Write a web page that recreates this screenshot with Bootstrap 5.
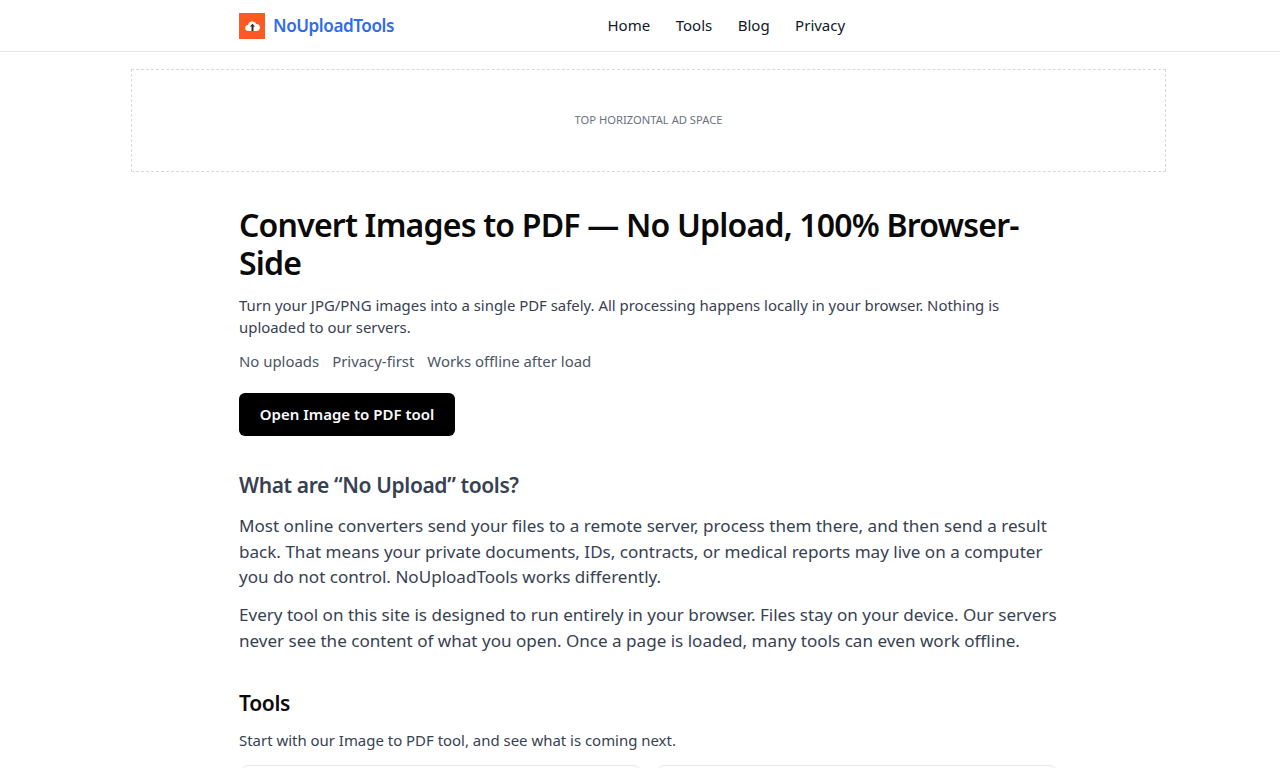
<!DOCTYPE html>
<html lang="en">
<head>
    <meta charset="UTF-8">
    <meta name="viewport" content="width=device-width, initial-scale=1.0">
    <title>NoUploadTools</title>
    <link href="https://cdn.jsdelivr.net/npm/bootstrap@5.3.0/dist/css/bootstrap.min.css" rel="stylesheet">
    <style>
        html, body { overflow: hidden; height: 768px; }
        body { font-family: "Noto Sans", sans-serif; color: #374151; background: #fff; }
        .site-header { height: 52px; border-bottom: 1px solid #e5e7eb; padding-left: 239px; }
        .brand-mark { width: 26px; height: 26px; background: #fc5a22; }
        .brand-name { font-size: 17.1px; font-weight: 600; color: #2f6bed; letter-spacing: -0.025em; }
        .site-links { margin-left: 213.5px; gap: 25.5px; }
        .site-links a { font-size: 15px; color: #111827; text-decoration: none; }
        .ad-slot { width: 1035px; height: 103px; margin: 17px 0 0 131px; border: 1px dashed #d9d9d9; font-size: 11.2px; color: #6b7280; }
        .page-main { width: 820px; margin-left: 239px; padding-top: 34px; }
        .page-main h1 { font-size: 32px; line-height: 38px; font-weight: 600; letter-spacing: -0.025em; color: #0a0a0a; margin: 0 0 12px; }
        .intro { font-size: 14.92px; line-height: 22px; margin-bottom: 11.5px; }
        .perks { gap: 13px; font-size: 14.92px; line-height: 22px; color: #4b5563; }
        .btn-tool { margin-top: 21.5px; width: 216px; height: 43px; padding: 0; background: #000; color: #f9fafb; font-size: 15px; font-weight: 600; border-radius: 6px; line-height: 41px; }
        .what-title { font-size: 21px; line-height: 28px; font-weight: 600; letter-spacing: -0.018em; color: #374151; margin: 35px 0 14px; }
        .body-copy { font-size: 17.07px; line-height: 25.5px; margin-bottom: 12.75px; }
        .tools-title { font-size: 21px; line-height: 28px; font-weight: 600; letter-spacing: -0.015em; color: #0a0a0a; margin: 35.5px 0 12px; }
        .tools-sub { font-size: 14.95px; line-height: 22px; margin-bottom: 14px; }
        .tool-grid { gap: 12px; }
        .tool-box { width: 404px; height: 120px; border: 1px solid #e5e7eb; border-radius: 10px; }
    </style>
</head>
<body>
    <header class="site-header d-flex align-items-center">
        <a class="d-flex align-items-center gap-2 text-decoration-none" href="#">
            <span class="brand-mark d-flex align-items-center justify-content-center">
                <svg width="15" height="12" viewBox="0 0 15 12">
                    <path d="M3.5 11a3 3 0 0 1-.5-6A4.4 4.4 0 0 1 11.3 4a3.5 3.5 0 0 1 .2 7z" fill="#fff"/>
                    <path d="M7.5 3.8 5 6.6h1.5V11h2V6.6H10z" fill="#3a2a20"/>
                </svg>
            </span>
            <span class="brand-name">NoUploadTools</span>
        </a>
        <nav class="site-links d-flex">
            <a href="#">Home</a>
            <a href="#">Tools</a>
            <a href="#">Blog</a>
            <a href="#">Privacy</a>
        </nav>
    </header>

    <div class="ad-slot d-flex align-items-center justify-content-center">TOP HORIZONTAL AD SPACE</div>

    <main class="page-main">
        <h1>Convert Images to PDF — No Upload, 100% Browser-Side</h1>
        <p class="intro">Turn your JPG/PNG images into a single PDF safely. All processing happens locally in your browser. Nothing is uploaded to our servers.</p>
        <div class="perks d-flex">
            <span>No uploads</span>
            <span>Privacy-first</span>
            <span>Works offline after load</span>
        </div>
        <a class="btn btn-tool d-block" href="#">Open Image to PDF tool</a>

        <h2 class="what-title">What are “No Upload” tools?</h2>
        <p class="body-copy">Most online converters send your files to a remote server, process them there, and then send a result back. That means your private documents, IDs, contracts, or medical reports may live on a computer you do not control. NoUploadTools works differently.</p>
        <p class="body-copy">Every tool on this site is designed to run entirely in your browser. Files stay on your device. Our servers never see the content of what you open. Once a page is loaded, many tools can even work offline.</p>

        <h2 class="tools-title">Tools</h2>
        <p class="tools-sub">Start with our Image to PDF tool, and see what is coming next.</p>
        <div class="tool-grid d-flex">
            <div class="tool-box"></div>
            <div class="tool-box"></div>
        </div>
    </main>
</body>
</html>
